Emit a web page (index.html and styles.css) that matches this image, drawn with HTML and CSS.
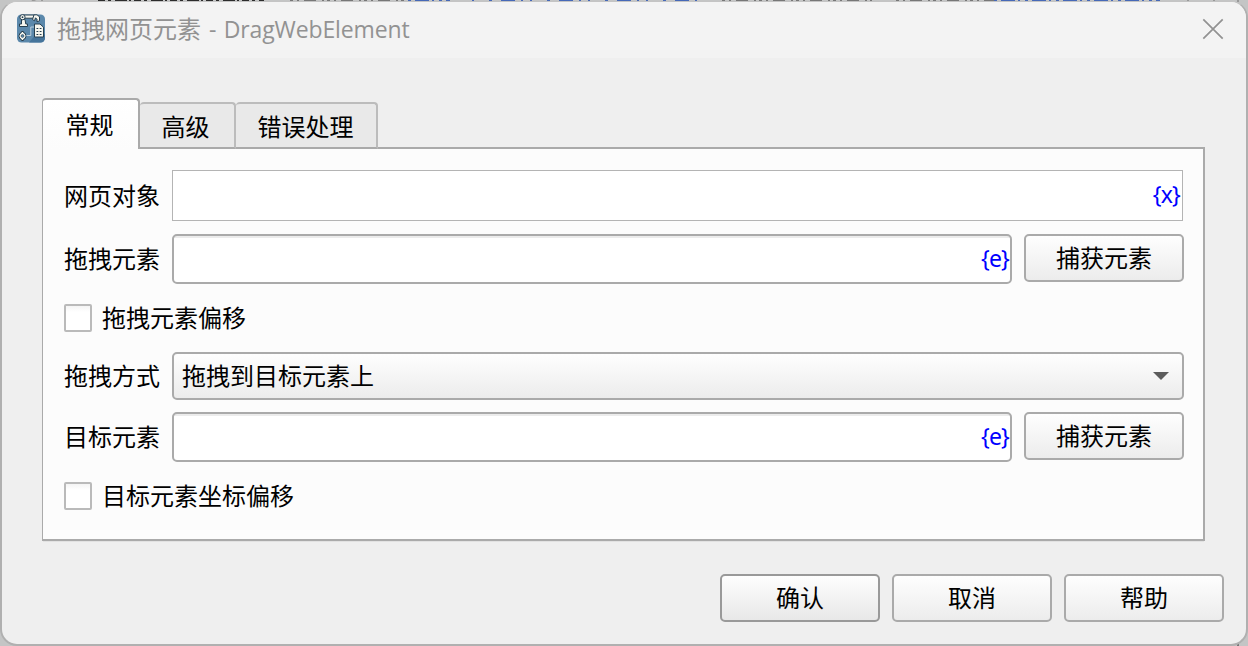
FILE: index.html
```html
<!DOCTYPE html>
<html lang="zh-CN">
<head>
<meta charset="utf-8">
<title>拖拽网页元素 - DragWebElement</title>
<link rel="stylesheet" href="styles.css">
</head>
<body>
<svg class="backdrop" width="1248" height="646" viewBox="0 0 1248 646" fill="none" stroke-width="2">
  <path d="M32 0l4 2M42 0v2M1188 0v2M1214 0v2M1238 0v2" stroke="#999"/>
  <path d="M98 1H264" stroke="#2c2c2c" stroke-dasharray="7 3 3 4 12 2 2 3"/>
  <path d="M290 1H408M722 1H872M896 1H994" stroke="#777" stroke-dasharray="3 4 2 5 12 6 2 3"/>
  <path d="M408 1H450M994 1H1160" stroke="#4669b8" stroke-dasharray="3 4 14 3 2 5"/>
  <path d="M472 1H704" stroke="#4669b8" stroke-dasharray="2 15 3 9 14 6 2 7"/>
  <path d="M42 645v1M1238 643v3" stroke="#777"/>
</svg>
<main class="dialog">
  <header class="titlebar">
    <svg class="app-icon" width="28" height="29" viewBox="0 0 28 29">
      <rect y="0.500" width="28" height="28" rx="4.500" fill="#5b88ab"/>
      <path d="M12 28.500l5-6h9l2-3v4.500a4.500 4.500 0 0 1-4.500 4.500z" fill="#45749b"/>
      <g stroke="#263f50" stroke-width="1" stroke-linejoin="round" fill="#f6f6ef">
        <path d="M6 1h11v3.200H7z"/>
        <path d="M4.500 5.500h3.500l.8 4.500h1.700v2.500h-8V10h2z"/>
        <circle cx="5.500" cy="3.200" r="2.600"/>
        <path d="M17 .8h3l2.500 2v4l-2.500 1v-2.500l-1.500-1.500-1 3-2-1.300z"/>
        <path d="M4.500 17.500h2l.4 1.500 1.600.6v1.600l1 .8-1 .8v1.600l-1.600.6-.4 1.500h-2L4 25l-1.500-.6v-1.600L1.500 22l1-.8v-1.600L4 19z"/>
        <path d="M17.500 10h5.500l3.500 3.200V23h-9z"/>
      </g>
      <circle cx="5.500" cy="3.200" r=".9" fill="#263f50"/>
      <circle cx="5.500" cy="22" r="1.400" fill="#5b88ab" stroke="#263f50" stroke-width=".6"/>
      <path d="M9.500 21.500h4.300v-8.500H17" stroke="#bdd0dd" fill="none"/>
      <path d="M19.500 14.500h1.800M22.700 14.500h1.800M19.500 17.500h1.800M22.700 17.500h1.800M19.500 20.500h1.800M22.700 20.500h1.800" stroke="#263f50" stroke-width="1.200"/>
    </svg>
    <h1 class="title">拖拽网页元素<span class="title-latin">- DragWebElement</span></h1>
    <svg class="close" width="22" height="22" viewBox="0 0 22 22"><path d="M1.300 1.300L20.700 20.700M20.700 1.300L1.300 20.700" stroke="#929292" stroke-width="1.700"/></svg>
  </header>
  <nav class="tabs">
    <div class="tab tab-active">常规</div>
    <div class="tab tab-second">高级</div>
    <div class="tab tab-third">错误处理</div>
  </nav>
  <section class="panel">
    <div class="row row-page"><label class="label">网页对象</label><div class="input input-flat">{x}</div></div>
    <div class="row row-field"><label class="label">拖拽元素</label><div class="input">{e}</div><button class="button">捕获元素</button></div>
    <div class="row row-check"><span class="checkbox"></span><label>拖拽元素偏移</label></div>
    <div class="row row-select"><label class="label">拖拽方式</label><div class="select"><span>拖拽到目标元素上</span><svg width="16" height="8" viewBox="0 0 16 8"><path d="M0 0h16L8 8z" fill="#5c5c5c"/></svg></div></div>
    <div class="row row-field"><label class="label">目标元素</label><div class="input">{e}</div><button class="button">捕获元素</button></div>
    <div class="row row-check"><span class="checkbox"></span><label>目标元素坐标偏移</label></div>
  </section>
  <footer class="actions">
    <button class="button button-default">确认</button>
    <button class="button">取消</button>
    <button class="button">帮助</button>
  </footer>
</main>
</body>
</html>
```
FILE: styles.css
```css
* { box-sizing: border-box; }
body {
  margin: 0;
  width: 1248px;
  height: 646px;
  overflow: hidden;
  padding-top: 1px;
  background: #c4c5c5;
  color: #000;
  font: 24px/32px "Noto Sans", "Noto Sans CJK SC", sans-serif;
}
.backdrop { position: absolute; left: 0; top: 0; }
.dialog {
  position: relative;
  height: 645px;
  border: 2px solid #b0b0b0;
  border-top: 1px solid #c4c4c4;
  border-radius: 17px;
  background: #efefef;
  overflow: hidden;
}
.titlebar {
  height: 56px;
  padding: 0 22px 0 15px;
  display: flex;
  align-items: center;
  background: #f3f3f3;
}
.app-icon { flex: none; margin-top: -3px; }
.title {
  margin: -2px 0 0 12px;
  flex: 1;
  font-size: 24px;
  font-weight: 400;
  line-height: 32px;
  color: #929292;
}
.title-latin {
  margin-left: 8px;
  font-family: "Open Sans", sans-serif;
  font-size: 23px;
  letter-spacing: -0.12px;
  word-spacing: 1.5px;
}
.close { margin-top: -2px; }
.tabs {
  height: 51px;
  margin: 40px 0 0 40px;
  display: flex;
  align-items: flex-end;
  position: relative;
  z-index: 1;
}
.tab {
  height: 47px;
  border: 2px solid #bcbcbc;
  border-bottom-color: #aaa;
  border-radius: 4px 4px 0 0;
  background: #e9e9e9;
  display: flex;
  justify-content: center;
  padding-top: 7px;
}
.tab-active {
  width: 98px;
  height: 51px;
  padding: 9px 2px 0 0;
  border-color: #aaa;
  border-left-width: 1px;
  border-bottom: 0;
  background: linear-gradient(#fff, #fcfcfc);
}
.tab-second { width: 96px; border-left: 0; padding-right: 3px; }
.tab-third { width: 142px; border-left: 0; padding-right: 1px; }
.panel {
  width: 1163px;
  height: 394px;
  margin: -2px 0 0 40px;
  padding: 21px 19px 0 21px;
  border: 2px solid #aaa;
  border-left-width: 1px;
  background: #fcfcfc;
  box-shadow: 0 2px 0 -1px #e2e2e2;
}
.row { display: flex; align-items: flex-start; }
.label { width: 108px; flex: none; }
.row-page { height: 64px; }
.row-page .label { padding-top: 10px; }
.row-field { height: 60px; }
.row-field .label { padding-top: 9px; }
.row-select { height: 60px; }
.row-select .label { padding-top: 8px; }
.row-check { height: 58px; padding-top: 10px; }
.row-check label { margin: -2px 0 0 10px; }
.input {
  flex: 1;
  height: 50px;
  border: 2px solid #aaa;
  border-radius: 5px;
  background: linear-gradient(#ececec 2px, #fff 2px);
  display: flex;
  align-items: center;
  justify-content: flex-end;
  padding: 0 1px 2px 0;
  font-size: 23px;
  letter-spacing: -0.8px;
  color: #00f;
}
.input-flat {
  height: 51px;
  margin-right: 1px;
  padding: 0 2px 3px 0;
  border: 1px solid #b4b4b4;
  border-radius: 0;
  background: #fff;
}
.button {
  width: 160px;
  height: 48px;
  padding: 0;
  border: 2px solid #aaa;
  border-radius: 5px;
  background: linear-gradient(#fefefe, #ececec);
  color: #000;
  font: inherit;
}
.row .button { margin-left: 12px; }
.checkbox {
  width: 28px;
  height: 28px;
  border: 2px solid #bababa;
  border-radius: 2px;
  background: linear-gradient(#f4f4f4, #fff 6px);
}
.select {
  flex: 1;
  height: 48px;
  border: 2px solid #aaa;
  border-radius: 5px;
  padding: 0 13px 0 8px;
  background: linear-gradient(#fefefe, #ececec);
  display: flex;
  align-items: center;
  justify-content: space-between;
}
.actions {
  display: flex;
  justify-content: flex-end;
  gap: 12px;
  margin: 33px 22px 0 0;
}
.button-default { border-color: #999; background: linear-gradient(#fefefe, #e8e8e8); }
```
